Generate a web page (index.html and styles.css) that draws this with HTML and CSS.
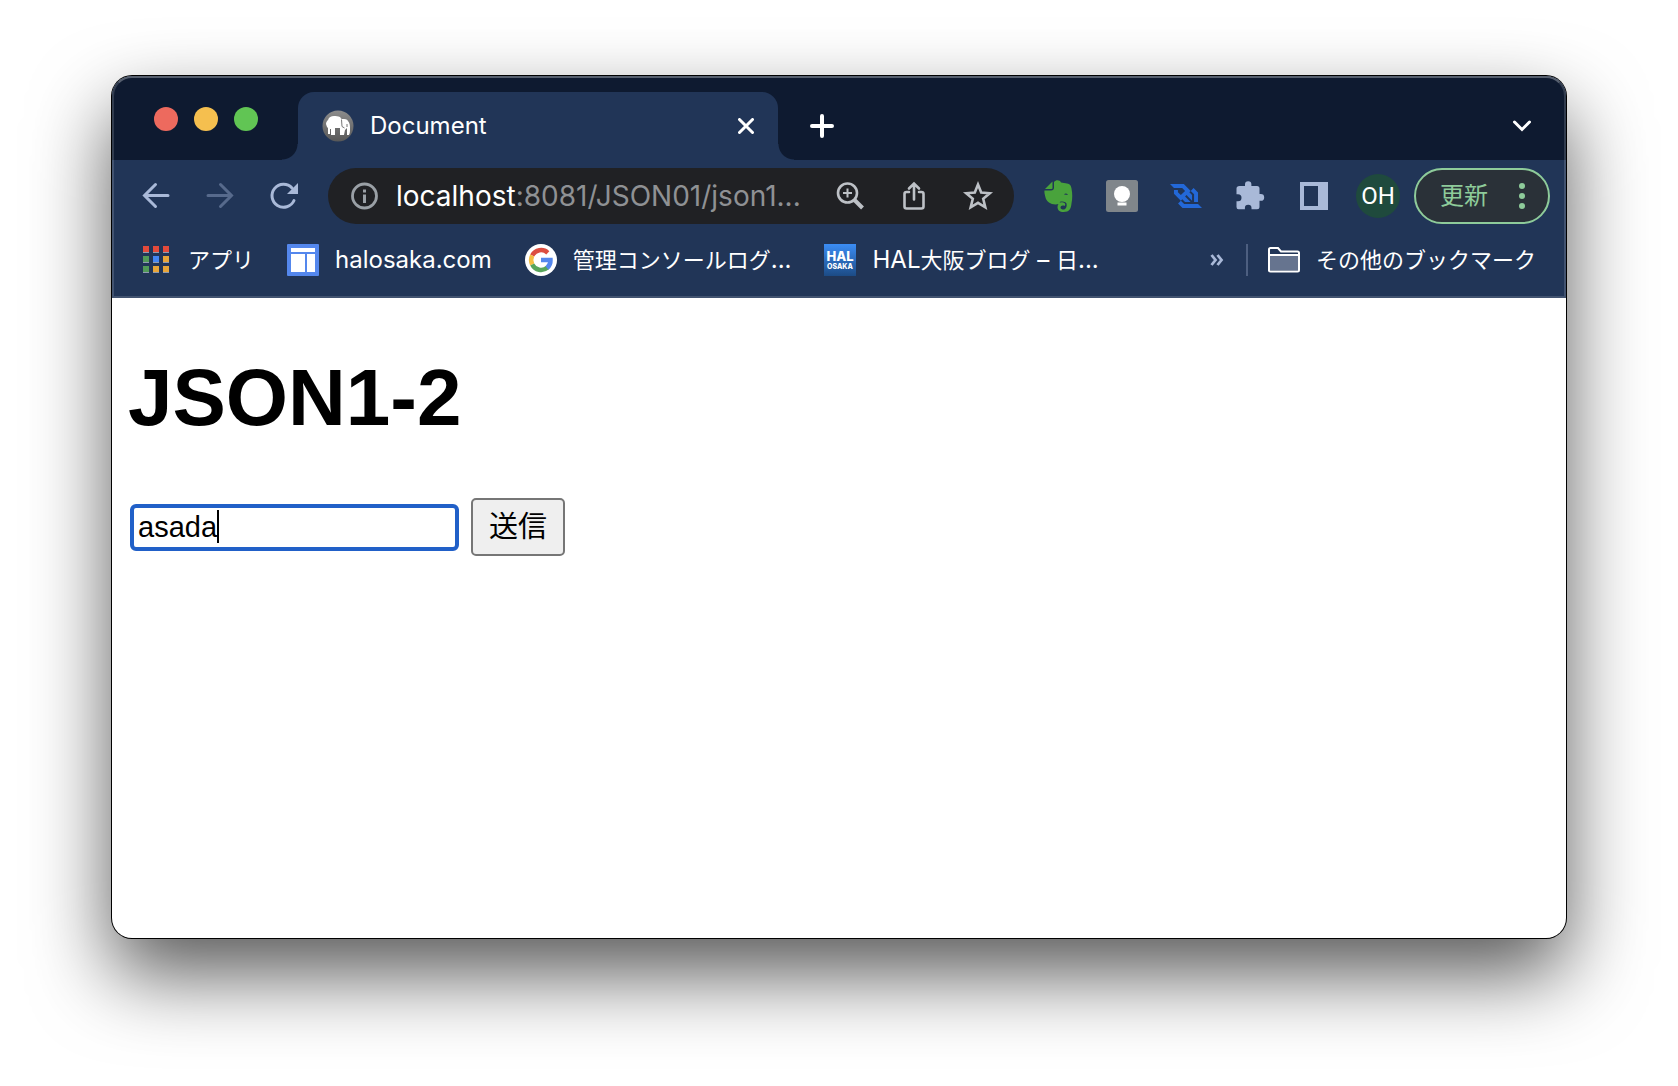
FILE: index.html
```
<!DOCTYPE html>
<html lang="ja">
<head>
<meta charset="utf-8">
<meta name="viewport" content="width=device-width, initial-scale=1">
<title>Document</title>
<link rel="stylesheet" href="styles.css">
</head>
<body>
<div class="window">
  <header class="chrome">
    <div class="tab-strip">
      <div class="lights">
        <button class="light light-close" aria-label="閉じる"></button>
        <button class="light light-minimize" aria-label="最小化"></button>
        <button class="light light-zoom" aria-label="拡大"></button>
      </div>
      <div class="tab">
        <svg class="icon" viewBox="0 0 32 32" aria-hidden="true">
          <defs><linearGradient id="mamp" x1="0" y1="0" x2="0" y2="1"><stop offset="0" stop-color="#8c8c8c"/><stop offset="1" stop-color="#585858"/></linearGradient></defs>
          <circle cx="16" cy="16" r="15.500" fill="url(#mamp)"/>
          <path fill="#fff" d="M4 14c0-2 1-3 2-4 1-3 3-4 6-4 2 0 4 0 6 1 1 1 1 2 2 2 3 0 5 0 6 2 2 2 2 5 2 8 0 2 0 4-1 6h-2v-7l-2 2-1 5h-4v-7h-5v7H9v-6H8v5H6v-6l-1-1z"/>
          <path d="M19.500 9.500l.5 7 2.500 1.500M25 14v3" fill="none" stroke="#777" stroke-width="1"/>
        </svg>
        <span class="tab-title">Document</span>
        <button class="icon-button tab-close" aria-label="タブを閉じる"><svg viewBox="0 0 16 16" width="16" height="16"><path d="M1.500 1.500l13 13M14.500 1.500l-13 13" fill="none" stroke="#fff" stroke-width="3" stroke-linecap="round"/></svg></button>
      </div>
      <button class="icon-button new-tab" aria-label="新しいタブ"><svg viewBox="0 0 24 24" width="24" height="24"><path d="M12 2v20M2 12h20" fill="none" stroke="#fff" stroke-width="4" stroke-linecap="round"/></svg></button>
      <button class="icon-button tab-search" aria-label="タブを検索"><svg viewBox="0 0 20 12" width="20" height="12"><path d="M2.500 2l7.500 7.500L17.500 2" fill="none" stroke="#fff" stroke-width="3" stroke-linecap="round"/></svg></button>
    </div>

    <div class="toolbar">
      <nav class="icon-row">
        <button class="icon-button" aria-label="戻る"><svg class="icon" viewBox="0 0 32 32"><path d="M28 15.500H5M15.500 4.500L4.500 15.500l11 11" fill="none" stroke="#a9b9d8" stroke-width="3" stroke-linecap="round" stroke-linejoin="miter"/></svg></button>
        <button class="icon-button" aria-label="進む" disabled><svg class="icon" viewBox="0 0 32 32"><path d="M4 15.500h23M16.500 4.500l11 11-11 11" fill="none" stroke="#576a8c" stroke-width="3" stroke-linecap="round"/></svg></button>
        <button class="icon-button" aria-label="再読み込み"><svg class="icon" viewBox="0 0 32 32"><path d="M26 20.500A11.500 11.500 0 1 1 24 8" fill="none" stroke="#a9b9d8" stroke-width="3" stroke-linecap="round"/><path d="M30 3v11H19z" fill="#a9b9d8"/></svg></button>
      </nav>
      <div class="omnibox">
        <svg class="icon" viewBox="0 0 32 32" aria-hidden="true"><circle cx="16.500" cy="16" r="12" fill="none" stroke="#9aa0a6" stroke-width="2.800"/><path d="M15 9.500h3v3h-3zM15 14.500h3V23h-3z" fill="#9aa0a6"/></svg>
        <a class="url" href="#"><span class="url-host">localhost</span>:8081/JSON01/json1...</a>
        <div class="icon-row">
          <button class="icon-button" aria-label="ズーム"><svg class="icon" viewBox="0 0 32 32"><g fill="none" stroke="#bdc1c6"><circle cx="13.500" cy="13" r="9.500" stroke-width="2.600"/><path d="M13.500 8.500v9M9 13h9" stroke-width="2"/><path d="M20.500 20l8 8" stroke-width="4"/></g></svg></button>
          <button class="icon-button" aria-label="共有"><svg class="icon" viewBox="0 0 32 32"><path d="M11 12H8.500Q6.500 12 6.500 14v12.500q0 2 2 2h15q2 0 2-2V14q0-2-2-2H21M16 19.500V4M11 8.500l5-5 5 5" fill="none" stroke="#bdc1c6" stroke-width="2.600" stroke-linecap="round"/></svg></button>
          <button class="icon-button" aria-label="ブックマークに追加"><svg class="icon" viewBox="0 0 32 32"><path d="M16 4.500l3.200 8 8.600.700-6.600 5.600 2.100 8.500L16 22.800l-7.300 4.500 2.100-8.500-6.600-5.600 8.600-.7z" fill="none" stroke="#bdc1c6" stroke-width="2.600"/></svg></button>
        </div>
      </div>
      <div class="icon-row">
        <button class="icon-button" aria-label="Evernote"><svg class="icon" viewBox="0 0 32 32"><path fill="#49a33c" d="M12 2c2-2.500 6-2 7 .5l6 1c3 .500 4 2 4.500 5 1 5 1 10 0 15-.5 5-2 8.500-8 8.500-4 0-6-2-6-5 0-4 4-6 7-4 1 1 1 2 0 3-2-1-4 0-4 1.500 0 1.500 1.500 2 3 2 3 0 3.500-4 3-6-1-2-4-2-6-2-1 2-2 3-5 3-5 0-9-3-10-7-.8-3-1.300-5-1-7H9c2 0 3-1 3-3z"/><path d="M3 9l7.500-7.500V8q0 1-1 1z" fill="#49a33c"/><path d="M22 14.500q2-2 4 .5z" fill="#213557"/></svg></button>
        <button class="icon-button" aria-label="Keep"><svg class="icon" viewBox="0 0 32 32"><rect width="32" height="32" rx="2.500" fill="#80868b"/><circle cx="16" cy="14" r="8" fill="#fff"/><path d="M12 17h8v4h-8zM11.500 22.500h9v3h-9z" fill="#fff"/></svg></button>
        <button class="icon-button" aria-label="WebSocket"><svg class="icon" viewBox="0 -32 256 256"><path fill="#2368d8" d="M192.440 144.645h31.780V68.339l-35.805-35.804-22.472 22.472 26.497 26.497v63.140zm31.864 15.931H113.452L86.954 134.080l11.237-11.236 21.885 21.885h45.028l-44.357-44.441 11.320-11.320 44.357 44.358V88.296l-21.801-21.801 11.152-11.153L110.685 0H0l31.696 31.696v.084h65.740l23.227 23.227-33.960 33.960L63.476 65.740V47.712h-31.780v31.193l55.007 55.007L64.314 156.300l35.805 35.805H256l-31.696-31.529z"/></svg></button>
        <button class="icon-button" aria-label="拡張機能"><svg class="icon" viewBox="0 0 32 32"><path fill="#a9b9d8" d="M5.500 6H11V4.500a3.200 3.200 0 0 1 6.400 0V6H23q2.500 0 2.500 2.500V14h1.300a3.400 3.400 0 0 1 0 6.800h-1.300v6q0 2.500-2.500 2.500h-5.500V28a3.300 3.300 0 0 0-6.600 0v1.300H4.500Q2.500 29.300 2.500 27v-5.700H4a3.500 3.500 0 0 0 0-7H2.500V8.500Q2.500 6 5.500 6z"/></svg></button>
        <button class="icon-button" aria-label="サイドパネル"><svg class="icon" viewBox="0 0 32 32"><path fill="#a9b9d8" fill-rule="evenodd" d="M2 2h28v28H2zM6 6v20h14V6z"/></svg></button>
      </div>
      <button class="avatar" aria-label="プロフィール OH">OH</button>
      <button class="update">更新<svg viewBox="0 0 6 28" width="6" height="28" aria-hidden="true"><g fill="#8ecb9a"><circle cx="3" cy="4" r="3"/><circle cx="3" cy="14" r="3"/><circle cx="3" cy="24" r="3"/></g></svg></button>
    </div>

    <nav class="bookmarks">
      <a class="bookmark" href="#"><svg class="icon" viewBox="0 0 32 32" aria-hidden="true"><g fill="#8f9bb0"><path d="M3 7h6v2H3zM13 7h6v2h-6zM23 7h6v2h-6zM3 17h6v2H3zM13 17h6v2h-6zM23 17h6v2h-6zM3 27h6v2H3zM13 27h6v2h-6zM23 27h6v2h-6z"/></g><path fill="#e34a3b" d="M3 2h6v6H3zM13 2h6v6h-6zM23 2h6v6h-6z"/><path fill="#519a58" d="M3 12h6v6H3zM3 22h6v6H3z"/><path fill="#4285f4" d="M13 12h6v6h-6z"/><path fill="#e8a539" d="M23 12h6v6h-6zM13 22h6v6h-6zM23 22h6v6h-6z"/></svg><span>アプリ</span></a>
      <a class="bookmark" href="#"><svg class="icon" viewBox="0 0 32 32" aria-hidden="true"><rect width="32" height="32" rx="1" fill="#5487ed"/><path fill="#fff" d="M4 4h24v4H4zM4 10h14v18H4zM20 10h8v18h-8z"/></svg><span class="latin">halosaka.com</span></a>
      <a class="bookmark" href="#"><svg class="icon" viewBox="0 0 32 32" aria-hidden="true"><circle cx="16" cy="16" r="16" fill="#fff"/><g fill="none" stroke-width="4.500"><path d="M22.800 8.800A9.900 9.900 0 0 0 7.200 11.600" stroke="#dc4e41"/><path d="M7.200 11.600a9.900 9.900 0 0 0 0 8.800" stroke="#f3bd42"/><path d="M7.200 20.400A9.900 9.900 0 0 0 22.500 23.500" stroke="#57a55a"/><path d="M22 24a9.900 9.900 0 0 0 3.500-8H16" stroke="#5487ed"/></g></svg><span>管理コンソールログ<span class="latin">...</span></span></a>
      <a class="bookmark" href="#"><svg class="icon" viewBox="0 0 32 32" aria-hidden="true"><defs><linearGradient id="hal" x1="0" y1="0" x2="0" y2="1"><stop offset="0" stop-color="#3b8df5"/><stop offset="1" stop-color="#1c4b85"/></linearGradient></defs><rect width="32" height="32" fill="url(#hal)"/><g class="hal-text" text-anchor="middle" fill="#fff"><text x="16" y="17" font-size="13">HAL</text><text x="16" y="25" font-size="7">OSAKA</text></g></svg><span><span class="latin">HAL</span>大阪ブログ<span class="latin"> – </span>日<span class="latin">...</span></span></a>
      <button class="icon-button overflow" aria-label="他のブックマーク"><svg viewBox="0 0 14 12" width="14" height="12"><path d="M1.500 1l4 5-4 5M7.500 1l4 5-4 5" fill="none" stroke="#a9b9d8" stroke-width="2.800"/></svg></button>
      <span class="divider"></span>
      <a class="bookmark bookmark-folder" href="#"><svg class="icon" viewBox="0 0 32 32" aria-hidden="true"><path d="M1 27V5.500Q1 4 2.500 4H10l3 3.500h16.500Q31 7.500 31 9v17q0 1.500-1.500 1.500h-27Q1 27.500 1 26z" fill="#213557" stroke="#fff" stroke-width="2"/><path d="M2 12h28v14H2z" fill="#66748f"/><path d="M1 11h30" stroke="#fff" stroke-width="2"/></svg><span>その他のブックマーク</span></a>
    </nav>
  </header>

  <main class="page">
    <h1 class="heading">JSON1-2</h1>
    <form class="form">
      <div class="field">
        <input class="field-input" type="text" value="asada" aria-label="名前">
        <span class="caret"></span>
      </div>
      <button class="submit" type="button">送信</button>
    </form>
  </main>
</div>
</body>
</html>
```
FILE: styles.css
```
* {
  box-sizing: border-box;
}

body {
  display: flex;
  flex-direction: column;
  min-height: 100vh;
  margin: 0;
  padding: 76px 112px 148px;
  background: #fff;
  font-family: Inter, "Noto Sans CJK JP", sans-serif;
}

button {
  margin: 0;
  padding: 0;
  border: 0;
  background: none;
  font-family: inherit;
}

a {
  color: inherit;
  text-decoration: none;
}

svg {
  display: block;
}

.window {
  display: flex;
  flex: 1;
  flex-direction: column;
  border-radius: 20px;
  background: #fff;
  box-shadow: 0 0 0 1px #000, 0 36px 80px rgba(0, 0, 0, 0.66);
}

/* Browser chrome */

.chrome {
  position: relative;
  border-radius: 20px 20px 0 0;
  background: #213557;
  color: #fff;
}

.chrome::after {
  content: "";
  position: absolute;
  inset: 0;
  border: 2px solid rgba(255, 255, 255, 0.15);
  border-top-color: rgba(255, 255, 255, 0.3);
  border-radius: 20px 20px 0 0;
  pointer-events: none;
}

.icon {
  flex: none;
  width: 32px;
  height: 32px;
}

.icon-button {
  display: flex;
  flex: none;
}

.icon-row {
  display: flex;
  flex: none;
  gap: 32px;
}

.tab-strip {
  display: flex;
  align-items: center;
  height: 84px;
  padding: 16px 34px 0 42px;
  border-radius: 20px 20px 0 0;
  background: #0e1a30;
}

.lights {
  display: flex;
  gap: 16px;
  margin: 0 40px 14px 0;
}

.light {
  width: 24px;
  height: 24px;
  border-radius: 50%;
}

.light-close {
  background: #ed6a5e;
}

.light-minimize {
  background: #f5bf4f;
}

.light-zoom {
  background: #61c554;
}

.tab {
  position: relative;
  display: flex;
  flex: 0 1 480px;
  align-items: center;
  gap: 16px;
  height: 68px;
  padding: 0 24px;
  border-radius: 16px 16px 0 0;
  background: #213557;
}

.tab::before,
.tab::after {
  content: "";
  position: absolute;
  bottom: 0;
  width: 16px;
  height: 16px;
}

.tab::before {
  right: 100%;
  background: radial-gradient(circle at 0 0, transparent 15px, #213557 16px);
}

.tab::after {
  left: 100%;
  background: radial-gradient(circle at 100% 0, transparent 15px, #213557 16px);
}

.tab-title {
  font-size: 24px;
  line-height: 32px;
}

.tab-close {
  margin-left: auto;
}

.new-tab {
  margin-left: 32px;
}

.tab-search {
  margin-left: auto;
}

.toolbar {
  display: flex;
  align-items: center;
  padding: 8px 16px 0 28px;
}

.omnibox {
  display: flex;
  flex: 1;
  align-items: center;
  gap: 16px;
  min-width: 0;
  height: 56px;
  margin: 0 28px;
  padding: 0 20px;
  border-radius: 28px;
  background: #202124;
}

.url {
  flex: 1;
  min-width: 0;
  overflow: hidden;
  color: #8f9194;
  font-size: 28px;
  line-height: 40px;
  white-space: nowrap;
}

.url-host {
  color: #fff;
}

.avatar {
  width: 44px;
  height: 44px;
  margin: 0 14px 0 26px;
  border-radius: 50%;
  background: #1f4a3d;
  color: #fff;
  font-family: Roboto, sans-serif;
  font-size: 24px;
}

.update {
  display: flex;
  flex: none;
  align-items: center;
  justify-content: space-between;
  width: 136px;
  height: 56px;
  padding: 0 23px 0 24px;
  border: 2px solid #8ecb9a;
  border-radius: 28px;
  background: #2a3138;
  color: #8ecb9a;
  font-size: 24px;
  line-height: 32px;
}

.bookmarks {
  display: flex;
  align-items: center;
  height: 74px;
  padding: 0 30px 2px 28px;
}

.bookmark {
  display: flex;
  gap: 16px;
  margin-right: 33px;
  font-size: 22px;
  line-height: 32px;
  white-space: nowrap;
}

.bookmark-folder {
  margin-right: 0;
}

.latin {
  font-size: 24px;
}

.hal-text {
  font-weight: 800;
}

.overflow {
  margin-left: auto;
}

.divider {
  width: 2px;
  height: 32px;
  margin: 0 20px 0 22px;
  background: #4d5f80;
}

/* Page content */

.page {
  padding: 54px 16px;
  color: #000;
}

.heading {
  margin: 0 0 54px;
  font-family: "Liberation Sans", sans-serif;
  font-size: 80px;
  font-weight: 700;
  line-height: 92px;
}

.form {
  display: flex;
  align-items: center;
  gap: 12px;
}

.field {
  position: relative;
  margin-left: 2px;
}

.field-input {
  display: block;
  width: 329px;
  height: 47px;
  padding: 0 4px;
  border: 4px solid #2160c8;
  border-radius: 6px;
  outline: 0;
  background: #fff;
  color: #000;
  font-family: "Liberation Sans", sans-serif;
  font-size: 29px;
}

.caret {
  position: absolute;
  top: 6px;
  left: 87px;
  width: 2px;
  height: 33px;
  background: #000;
}

.submit {
  width: 94px;
  height: 58px;
  border: 2px solid #767676;
  border-radius: 5px;
  background: #efefef;
  color: #000;
  font-size: 29px;
  line-height: 40px;
}
```
